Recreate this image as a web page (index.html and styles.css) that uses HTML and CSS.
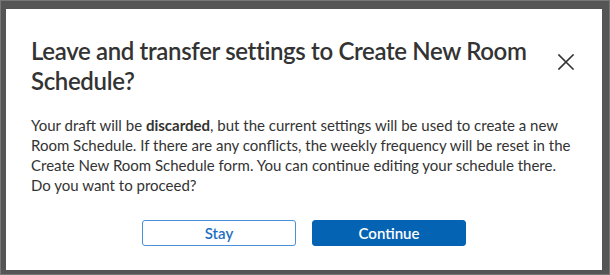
FILE: index.html
```html
<!DOCTYPE html>
<html lang="en">
<head>
<meta charset="utf-8">
<title>Leave and transfer settings</title>
<link rel="stylesheet" href="styles.css">
</head>
<body>
<div class="backdrop">
  <div class="modal" role="dialog" aria-labelledby="modal-title">
    <div class="modal-header">
      <h2 class="modal-title" id="modal-title">Leave and transfer settings to Create New Room Schedule?</h2>
      <button class="close-btn" aria-label="Close">
        <svg width="16" height="16" viewBox="0 0 16 16" aria-hidden="true">
          <path d="M1 1 L15 15 M15 1 L1 15" stroke="#333" stroke-width="1.6" fill="none" stroke-linecap="square"/>
        </svg>
      </button>
    </div>
    <p class="modal-body">Your draft will be <strong>discarded</strong>, but the current settings will be used to create a new Room Schedule. If there are any conflicts, the weekly frequency will be reset in the Create New Room Schedule form. You can continue editing your schedule there. Do you want to proceed?</p>
    <div class="modal-actions">
      <button class="btn btn-secondary">Stay</button>
      <button class="btn btn-primary">Continue</button>
    </div>
  </div>
</div>
</body>
</html>
```

FILE: styles.css
```css
html, body {
  margin: 0;
  padding: 0;
  height: 100%;
}

body {
  background: #4f4f4f;
  font-family: Lato, "Open Sans", sans-serif;
  color: #333;
}

.backdrop {
  box-sizing: border-box;
  height: 100%;
  padding: 9px 8px 5px 6px;
  background: #555;
  border: 1px solid #777;
}

.modal {
  box-sizing: border-box;
  width: 596px;
  height: 261px;
  margin-top: -1px;
  margin-left: -1px;
  background: #fff;
  padding: 27px 25px 24px 25px;
  display: flex;
  flex-direction: column;
}

.modal-header {
  display: flex;
  align-items: flex-start;
  justify-content: space-between;
}

.modal-title {
  margin: 0;
  font-size: 24px;
  line-height: 30px;
  font-weight: 600;
  letter-spacing: -0.35px;
  color: #333;
  max-width: 528px;
}

.close-btn {
  border: 0;
  background: none;
  padding: 0;
  margin: 18px 3px 0 0;
  width: 16px;
  height: 16px;
  display: flex;
  flex-shrink: 0;
}

.modal-body {
  margin: 19px 0 0 0;
  font-size: 15px;
  line-height: 20px;
  color: #333;
}

.modal-body strong {
  font-weight: 700;
}

.modal-actions {
  margin-top: auto;
  display: flex;
  justify-content: center;
  gap: 16px;
}

.btn {
  box-sizing: border-box;
  width: 154px;
  height: 26px;
  border-radius: 3px;
  font-family: inherit;
  font-size: 15px;
  font-weight: 600;
  cursor: pointer;
}

.btn-secondary {
  background: #fff;
  border: 1px solid #4a90d6;
  color: #1f6fbf;
}

.btn-primary {
  background: #0563b4;
  border: 1px solid #0563b4;
  color: #fff;
}
```
